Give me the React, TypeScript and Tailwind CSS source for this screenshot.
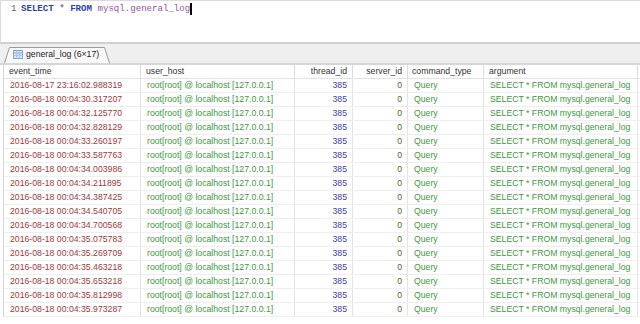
import React from "react";

const times = [
  "2016-08-17 23:16:02.988319",
  "2016-08-18 00:04:30.317207",
  "2016-08-18 00:04:32.125770",
  "2016-08-18 00:04:32.828129",
  "2016-08-18 00:04:33.260197",
  "2016-08-18 00:04:33.587763",
  "2016-08-18 00:04:34.003986",
  "2016-08-18 00:04:34.211895",
  "2016-08-18 00:04:34.387425",
  "2016-08-18 00:04:34.540705",
  "2016-08-18 00:04:34.700568",
  "2016-08-18 00:04:35.075783",
  "2016-08-18 00:04:35.269709",
  "2016-08-18 00:04:35.463218",
  "2016-08-18 00:04:35.653218",
  "2016-08-18 00:04:35.812998",
  "2016-08-18 00:04:35.973287",
];

const cols = "grid grid-cols-[137px_154px_58px_55px_76px_154px]";

function TableIcon() {
  return (
    <svg width="10" height="9" viewBox="0 0 10 9" className="shrink-0">
      <rect x="0.5" y="0.5" width="9" height="8" fill="#dbe8f7" stroke="#7ea6d6" />
      <line x1="0.5" y1="3" x2="9.5" y2="3" stroke="#7ea6d6" />
      <line x1="0.5" y1="5.5" x2="9.5" y2="5.5" stroke="#a9c4e6" />
      <line x1="3.5" y1="0.5" x2="3.5" y2="8.5" stroke="#a9c4e6" />
      <line x1="6.5" y1="0.5" x2="6.5" y2="8.5" stroke="#a9c4e6" />
    </svg>
  );
}

// slanted tab outline drawn under the label
function TabShape() {
  return (
    <svg className="absolute inset-0" width="106" height="16" viewBox="0 0 106 16" preserveAspectRatio="none">
      <path d="M0.5 16 L5.5 0.5 L100.5 0.5 L105.5 16 Z" fill="#f9f9f9" />
      <path d="M0.5 16 L5.5 0.5 L100.5 0.5 L105.5 16" fill="none" stroke="#9a9a9a" />
    </svg>
  );
}

export default function App() {
  return (
    <div className="w-[640px] h-[324px] overflow-hidden bg-white font-['Liberation_Sans',Arial,sans-serif] text-[8.7px]">
      {/* query editor */}
      <div className="h-[44px] border-t border-l border-[#dcdcdc] border-b-2 border-b-[#cfcfcf] bg-white pl-[10px] pt-[2px] font-['Liberation_Mono',monospace] text-[9.1px] leading-[12px] flex items-start">
        <span className="text-[#666] w-[10px]">1</span>
        <span className="font-bold text-[#2e3fb8]">SELECT</span>
        <span className="whitespace-pre"> </span>
        <span className="font-bold text-[#9a6ab0]">*</span>
        <span className="whitespace-pre"> </span>
        <span className="font-bold text-[#2e3fb8]">FROM</span>
        <span className="whitespace-pre"> </span>
        <span className="text-[#9a4fb0]">mysql.general_log</span>
        <span className="w-[2px] h-[12px] bg-black" />
      </div>

      {/* result tabs */}
      <div className="h-[21px] bg-[#efefef] border-b-2 border-[#d6d6d6] pl-[4px] flex items-end">
        <div className="relative w-[106px] h-[16px] flex items-center gap-[3px] pl-[9px] text-[#222]">
          <TabShape />
          <span className="relative flex items-center gap-[3px]">
            <TableIcon />
            <span>general_log (6×17)</span>
          </span>
        </div>
      </div>

      {/* grid */}
      <div className="ml-[3px] border-l border-[#d8d8d8]">
        <div className={`${cols} h-[14px] items-center text-[#333] border-b border-[#e2e2e2]`}>
          <div className="pl-[5px] border-r border-[#dcdcdc] h-full flex items-center">event_time</div>
          <div className="pl-[5px] border-r border-[#dcdcdc] h-full flex items-center">user_host</div>
          <div className="pr-[5px] border-r border-[#dcdcdc] h-full flex items-center justify-end">thread_id</div>
          <div className="pr-[5px] border-r border-[#dcdcdc] h-full flex items-center justify-end">server_id</div>
          <div className="pl-[4px] border-r border-[#dcdcdc] h-full flex items-center">command_type</div>
          <div className="pl-[5px] border-r border-[#dcdcdc] h-full flex items-center">argument</div>
        </div>
        {times.map((t) => (
          <div key={t} className={`${cols} h-[14px] items-center border-b border-[#efefef]`}>
            <div className="pl-[6px] border-r border-[#e4e4e4] h-full flex items-center text-[#a33a3a]">{t}</div>
            <div className="pl-[6px] border-r border-[#e4e4e4] h-full flex items-center text-[#3c9a3c]">root[root] @ localhost [127.0.0.1]</div>
            <div className="pr-[5px] border-r border-[#e4e4e4] h-full flex items-center justify-end text-[#4040b0]">385</div>
            <div className="pr-[5px] border-r border-[#e4e4e4] h-full flex items-center justify-end text-[#4a6a20]">0</div>
            <div className="pl-[6px] border-r border-[#e4e4e4] h-full flex items-center text-[#3c9a3c]">Query</div>
            <div className="pl-[6px] border-r border-[#e4e4e4] h-full flex items-center text-[#3c9a3c]">SELECT * FROM mysql.general_log</div>
          </div>
        ))}
      </div>
    </div>
  );
}
